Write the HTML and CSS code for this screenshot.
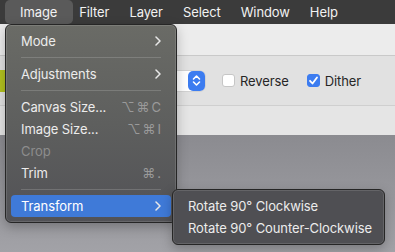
FILE: index.html
```html
<!DOCTYPE html>
<html lang="en">
<head>
  <meta charset="UTF-8" />
  <meta name="viewport" content="width=device-width, initial-scale=1.0" />
  <title>Image menu</title>
  <link rel="stylesheet" href="styles.css">
</head>
<body>
  <div class="menubar">
    <span class="menubar-item active">Image</span>
    <span class="menubar-item">Filter</span>
    <span class="menubar-item">Layer</span>
    <span class="menubar-item">Select</span>
    <span class="menubar-item">Window</span>
    <span class="menubar-item">Help</span>
  </div>

  <div class="window">
    <div class="toolbar"></div>
    <div class="options">
      <div class="swatch"></div>
      <div class="select">
        <span class="stepper">
          <svg width="9" height="13" viewBox="0 0 9 13"><polyline points="1.5,5 4.5,2 7.5,5" /><polyline points="1.5,8 4.5,11 7.5,8" /></svg>
        </span>
      </div>
      <label class="check"><span class="box"></span>Reverse</label>
      <label class="check"><span class="box checked">
        <svg width="11" height="11" viewBox="0 0 11 11"><polyline points="2,5.8 4.5,8.5 9,2.5" /></svg>
      </span>Dither</label>
    </div>
    <div class="lower"></div>
  </div>

  <div class="desktop"></div>

  <div class="menu">
    <div class="item"><span>Mode</span><svg class="chevron" width="6" height="10" viewBox="0 0 6 10"><polyline points="1,1 5,5 1,9" /></svg></div>
    <div class="sep"></div>
    <div class="item"><span>Adjustments</span><svg class="chevron" width="6" height="10" viewBox="0 0 6 10"><polyline points="1,1 5,5 1,9" /></svg></div>
    <div class="sep"></div>
    <div class="item"><span>Canvas Size...</span><span class="key">⌥⌘C</span></div>
    <div class="item"><span>Image Size...</span><span class="key">⌥⌘I</span></div>
    <div class="item disabled"><span>Crop</span></div>
    <div class="item"><span>Trim</span><span class="key">⌘.</span></div>
    <div class="sep"></div>
    <div class="item selected"><span>Transform</span><svg class="chevron" width="6" height="10" viewBox="0 0 6 10"><polyline points="1,1 5,5 1,9" /></svg></div>
  </div>

  <div class="submenu">
    <div class="item"><span>Rotate 90° Clockwise</span></div>
    <div class="item"><span>Rotate 90° Counter-Clockwise</span></div>
  </div>
</body>
</html>
```

FILE: styles.css
```css
body {
  margin: 0;
  padding: 0;
  width: 395px;
  height: 252px;
  overflow: hidden;
  font-family: 'Inter', 'DejaVu Sans', sans-serif;
  font-size: 13px;
  white-space: nowrap;
  background: #9a9a9f;
}

.menubar {
  display: flex;
  align-items: stretch;
  height: 24px;
  padding-left: 5px;
  background: #3b3b3b;
  color: #f2f2f2;
  letter-spacing: -0.1px;
}

.menubar-item {
  display: flex;
  align-items: center;
  padding: 0 10px;
}

.menubar-item.active {
  padding: 0 16px 0 15px;
  margin-right: -4px;
  background: #5a5a5a;
  border-radius: 5px;
}

.window {
  background: #e4e4e4;
}

.toolbar {
  height: 31px;
  background: #ececec;
  border-bottom: 1px solid #c9c9c9;
}

.options {
  display: flex;
  align-items: center;
  height: 49px;
  background: #e1e1e1;
  border-bottom: 1px solid #cfcfcf;
  color: #262626;
}

.swatch {
  width: 40px;
  height: 22px;
  margin-right: 60px;
  background: #b3c21f;
}

.select {
  display: flex;
  justify-content: flex-end;
  width: 105px;
  height: 20px;
  margin-right: 17px;
  background: #fff;
  border-radius: 5px;
  box-shadow: 0 0 0 0.5px #c4c4c4;
}

.stepper {
  display: flex;
  align-items: center;
  justify-content: center;
  width: 17px;
  height: 20px;
  background: #3c7cf0;
  border-radius: 5px;
}

.stepper polyline,
.box polyline {
  fill: none;
  stroke: #fff;
  stroke-width: 1.6;
  stroke-linecap: round;
  stroke-linejoin: round;
}

.check {
  display: flex;
  align-items: center;
  gap: 5px;
  margin-right: 18px;
  letter-spacing: -0.1px;
}

.box {
  display: flex;
  align-items: center;
  justify-content: center;
  box-sizing: border-box;
  width: 13px;
  height: 13px;
  background: #fff;
  border: 1px solid #c6c6c6;
  border-radius: 3px;
}

.box.checked {
  background: #3c7cf0;
  border-color: #3c7cf0;
}

.box.checked polyline {
  stroke-width: 1.8;
}

.lower {
  height: 29px;
  background: #e5e5e5;
}

.desktop {
  height: 117px;
  background: linear-gradient(#8b8b90, #a2a2a7);
}

.menu,
.submenu {
  position: absolute;
  box-sizing: border-box;
  padding: 5px;
  border: 1px solid #262626;
  border-radius: 6px;
  box-shadow: inset 0 0 0 1px rgba(255, 255, 255, 0.12), 0 4px 12px rgba(0, 0, 0, 0.25);
  color: #ececec;
  letter-spacing: -0.1px;
}

.menu {
  left: 5px;
  top: 24px;
  width: 172px;
  background: linear-gradient(#6a6b66, #5e5f5e 50%, #525256);
}

.submenu {
  left: 172px;
  top: 189px;
  width: 213px;
  background: #4f4f53;
}

.item {
  display: flex;
  align-items: center;
  justify-content: space-between;
  height: 22px;
  padding: 0 10px;
  border-radius: 4px;
}

.item.disabled {
  color: #8d8d8d;
}

.item.selected {
  background: #3f7ad8;
  color: #fff;
}

.key {
  color: #9a9a9a;
  letter-spacing: 2px;
  margin-right: -2px;
}

.chevron polyline {
  fill: none;
  stroke: #e8e8e8;
  stroke-width: 1.5;
  stroke-linecap: round;
  stroke-linejoin: round;
}

.sep {
  height: 11px;
  display: flex;
  align-items: center;
  padding: 0 10px;
}

.sep::before {
  content: "";
  flex: 1;
  height: 1px;
  background: rgba(255, 255, 255, 0.16);
}
```
